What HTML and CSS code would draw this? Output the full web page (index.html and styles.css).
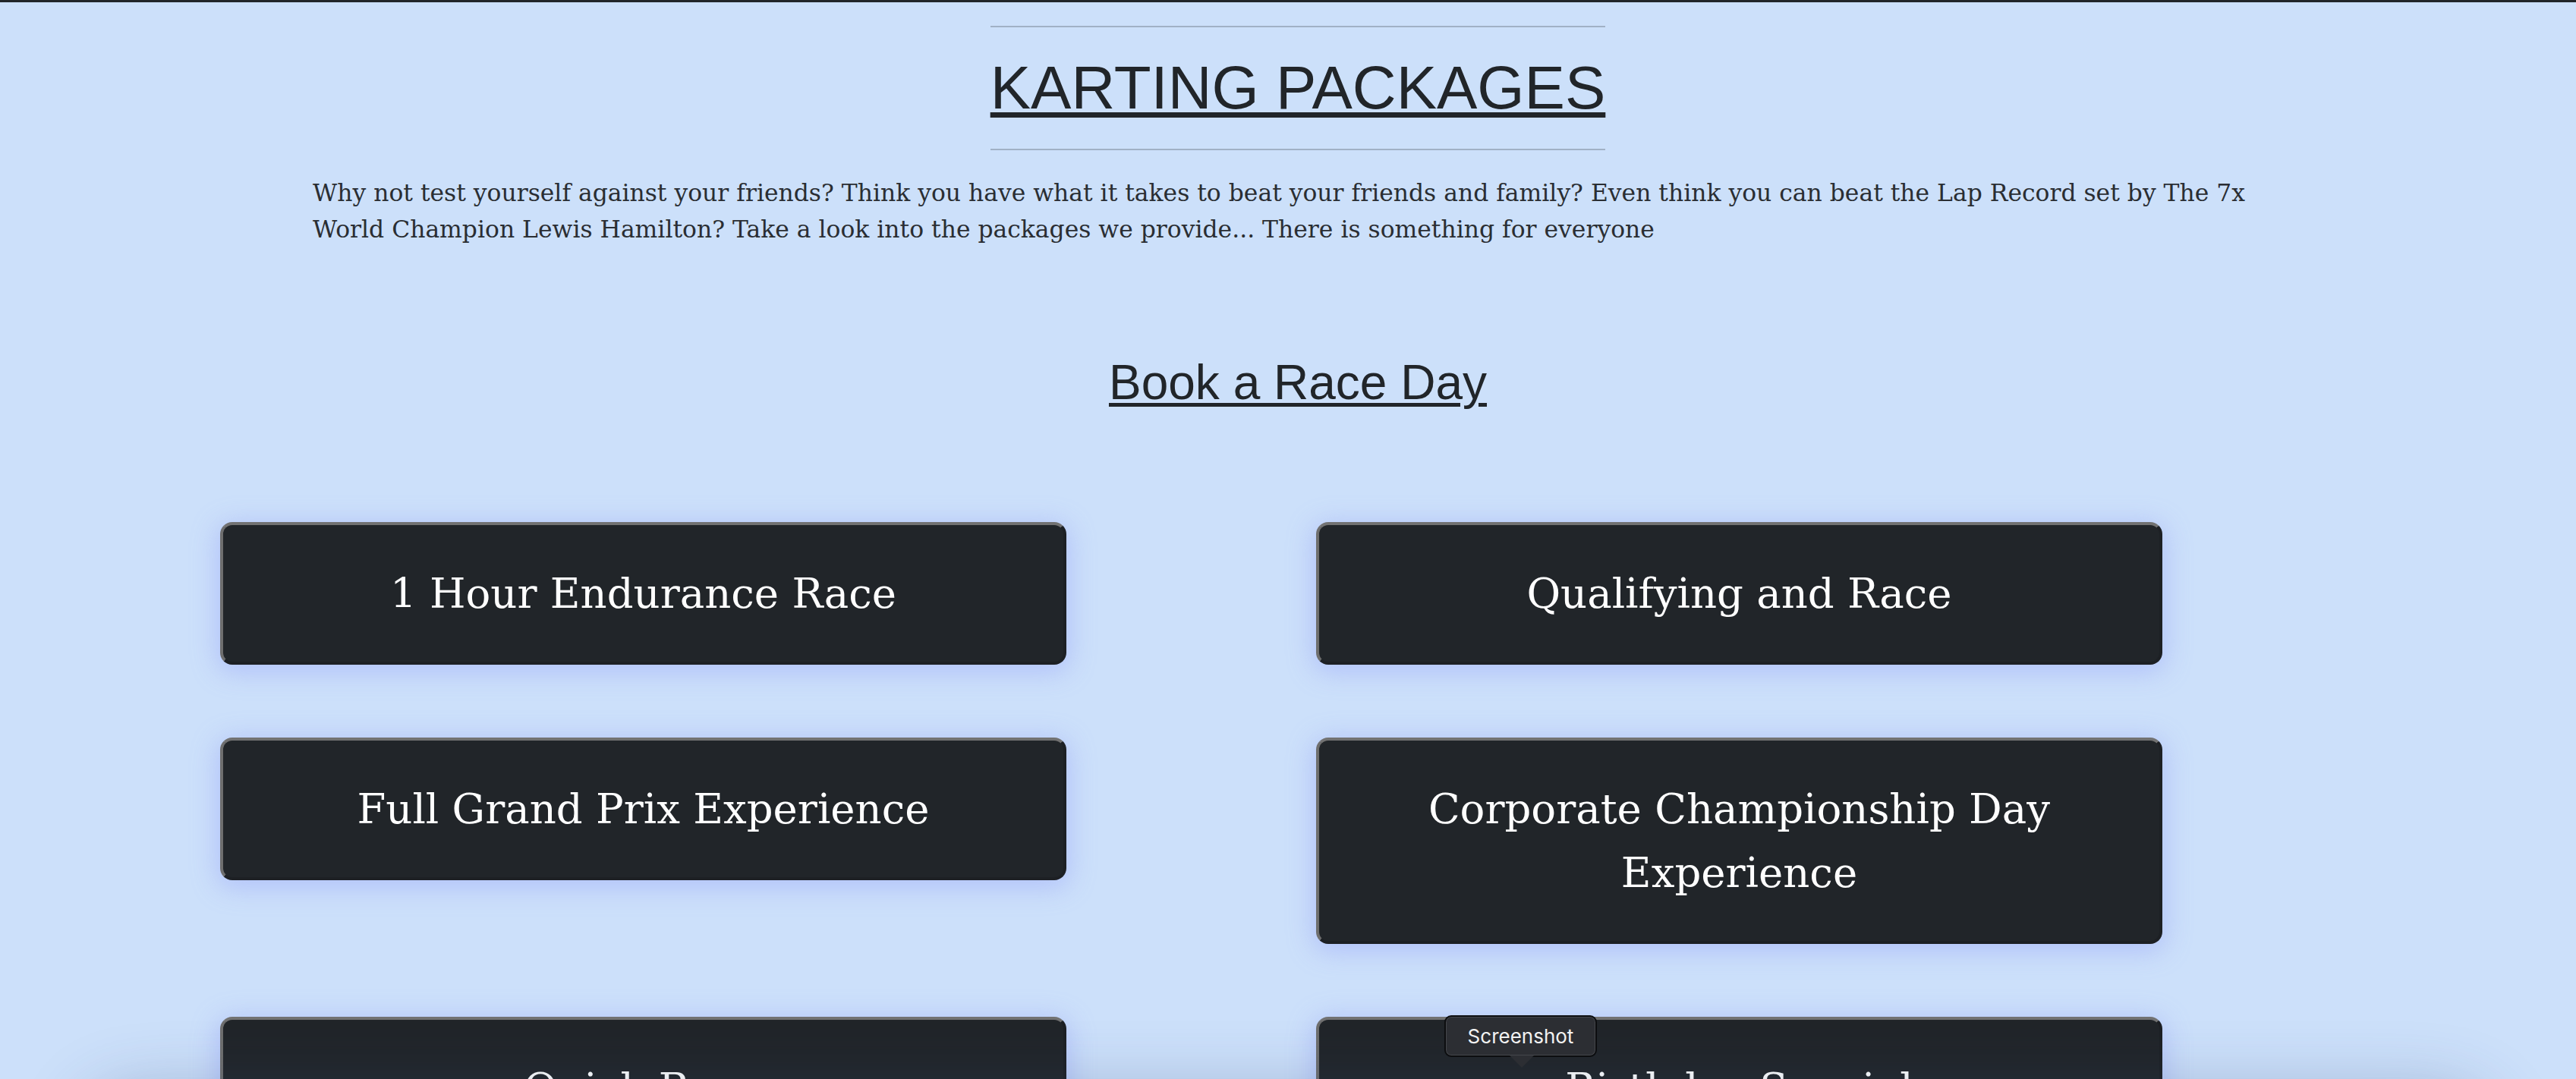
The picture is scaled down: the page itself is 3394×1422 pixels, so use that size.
FILE: index.html
```html
<!DOCTYPE html>
<html lang="en">
<head>
<meta charset="utf-8">
<title>Karting Packages</title>
<link rel="stylesheet" href="styles.css">
</head>
<body>
<main class="page">
  <div class="head">
    <header class="title-block">
      <hr class="rule">
      <h1 class="title">KARTING PACKAGES</h1>
      <hr class="rule">
    </header>
  </div>
  <p class="intro">Why not test yourself against your friends? Think you have what it takes to beat your friends and family? Even think you can beat the Lap Record set by The 7x World Champion Lewis Hamilton? Take a look into the packages we provide... There is something for everyone</p>
  <div class="head">
    <h2 class="subtitle">Book a Race Day</h2>
  </div>
  <div class="packages">
    <button class="pkg">1 Hour Endurance Race</button>
    <button class="pkg">Qualifying and Race</button>
    <button class="pkg">Full Grand Prix Experience</button>
    <button class="pkg">Corporate Championship Day Experience</button>
    <button class="pkg">Quick Race</button>
    <button class="pkg">Birthday Special</button>
  </div>
</main>
<div class="dock-shadow"></div>
<div class="tooltip">Screenshot</div>
</body>
</html>
```

FILE: styles.css
```css
html {
  overflow: hidden;
}
body {
  margin: 0;
  background: #cce0fa;
  color: #212529;
  border-top: 3px solid #212529;
  min-height: 1419px;
  font-family: "DejaVu Serif", serif;
}
.page {
  display: flex;
  flex-direction: column;
}
.head {
  padding-left: 26px;
  display: flex;
  justify-content: center;
}
.title-block {
  display: flex;
  flex-direction: column;
  margin-top: 31px;
}
.rule {
  margin: 0;
  border: 0;
  border-top: 2px solid #a1b1c5;
  height: 0;
}
.title {
  margin: 32px 0;
  font-family: "Liberation Sans", Arial, sans-serif;
  font-weight: 400;
  font-size: 80px;
  line-height: 96px;
  text-decoration: underline;
  text-decoration-thickness: 7px;
  text-underline-offset: 5px;
  white-space: nowrap;
}
.intro {
  margin: 32px 0 0 412px;
  width: 2600px;
  font-size: 31.4px;
  line-height: 48px;
  color: #2a2e33;
}
.subtitle {
  margin: 140px 0 0;
  font-family: "Liberation Sans", Arial, sans-serif;
  font-weight: 400;
  font-size: 64px;
  line-height: 77px;
  text-decoration: underline;
  text-decoration-thickness: 5px;
  text-underline-offset: 5px;
}
.packages {
  margin: 145px 0 0 290px;
  display: grid;
  grid-template-columns: 1115px 1115px;
  column-gap: 329px;
  row-gap: 96px;
  align-items: start;
}
.pkg {
  box-sizing: border-box;
  width: 100%;
  padding: 48px 40px;
  border: 4px solid;
  border-color: #727272 #1d2024 #1d2024 #6e6e6e;
  border-radius: 16px;
  background: #212529;
  color: #ffffff;
  font-family: "DejaVu Serif", serif;
  font-size: 54.5px;
  line-height: 84px;
  text-align: center;
  box-shadow: 0 6px 34px 4px rgba(140, 150, 250, 0.4);
}
.dock-shadow {
  position: absolute;
  left: 140px;
  right: 140px;
  top: 1470px;
  height: 80px;
  border-radius: 60px;
  box-shadow: 0 0 90px 30px rgba(50, 70, 120, 0.32);
}
.tooltip {
  position: absolute;
  left: 1903px;
  top: 1338px;
  width: 201px;
  height: 55px;
  box-sizing: border-box;
  border: 2px solid #0c0d0f;
  border-radius: 9px;
  background: #2c2e33;
  box-shadow: inset 0 0 0 1px #45474c;
  color: #f2f2f2;
  font-family: Inter, "Noto Sans", sans-serif;
  font-size: 26px;
  line-height: 51px;
  text-align: center;
}
.tooltip::after {
  content: "";
  position: absolute;
  left: 84px;
  top: 51px;
  border-left: 16px solid transparent;
  border-right: 16px solid transparent;
  border-top: 16px solid #2c2e33;
}
```
